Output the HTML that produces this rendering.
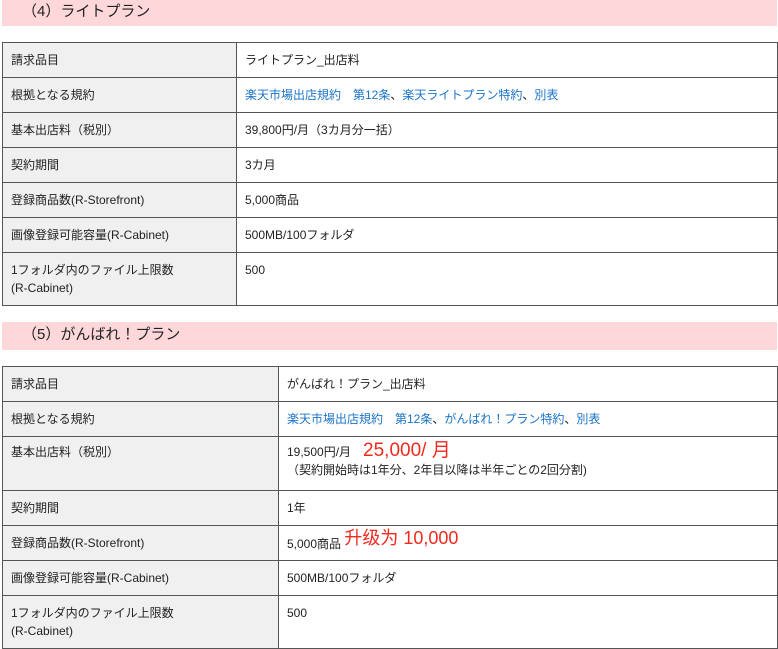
<!DOCTYPE html>
<html><head><meta charset="utf-8"><style>
body{margin:0;background:#fff;font-family:"Liberation Sans","Noto Sans CJK JP",sans-serif;color:#222;font-size:12px;width:778px;height:648px;overflow:hidden;position:relative}
.h{position:absolute;left:2px;width:775px;background:#fdd7d9;font-size:15px;color:#222;padding-left:20px;box-sizing:border-box}
table{position:absolute;left:2px;width:776px;border-collapse:collapse;table-layout:fixed}
td{border:1px solid #555;padding:0 8px;height:34px;vertical-align:middle;font-size:12px;line-height:18px}
td:first-child{background:#f0f0f0}
td.t{vertical-align:top;padding-top:8px}
a{color:#1a73c8;text-decoration:none}
.r{color:#f02a1f;font-size:18px}
</style></head><body>
<div class="h" style="top:0;height:26px;line-height:24px">（4）ライトプラン</div>
<table style="top:42px">
<col style="width:234px"><col>
<tr><td>請求品目</td><td>ライトプラン_出店料</td></tr>
<tr><td>根拠となる規約</td><td><a>楽天市場出店規約　第12条</a>、<a>楽天ライトプラン特約</a>、<a>別表</a></td></tr>
<tr><td>基本出店料（税別）</td><td>39,800円/月（3カ月分一括）</td></tr>
<tr><td>契約期間</td><td>3カ月</td></tr>
<tr><td>登録商品数(R-Storefront)</td><td>5,000商品</td></tr>
<tr><td>画像登録可能容量(R-Cabinet)</td><td>500MB/100フォルダ</td></tr>
<tr><td class="t" style="height:44px">1フォルダ内のファイル上限数<br>(R-Cabinet)</td><td class="t">500</td></tr>
</table>
<div class="h" style="top:322px;height:28px;line-height:26px">（5）がんばれ！プラン</div>
<table style="top:366px">
<col style="width:276px"><col>
<tr><td>請求品目</td><td>がんばれ！プラン_出店料</td></tr>
<tr><td>根拠となる規約</td><td><a>楽天市場出店規約　第12条</a>、<a>がんばれ！プラン特約</a>、<a>別表</a></td></tr>
<tr><td class="t" style="height:47px;padding-top:6px">基本出店料（税別）</td><td class="t" style="padding-top:5px">19,500円/月　<span class="r" style="font-size:19px">25,000/ 月</span><br>（契約開始時は1年分、2年目以降は半年ごとの2回分割)</td></tr>
<tr><td>契約期間</td><td>1年</td></tr>
<tr><td>登録商品数(R-Storefront)</td><td>5,000商品 <span class="r" style="position:relative;top:-4px">升级为 10,000</span></td></tr>
<tr><td>画像登録可能容量(R-Cabinet)</td><td>500MB/100フォルダ</td></tr>
<tr><td class="t" style="height:44px">1フォルダ内のファイル上限数<br>(R-Cabinet)</td><td class="t">500</td></tr>
</table>
</body></html>
